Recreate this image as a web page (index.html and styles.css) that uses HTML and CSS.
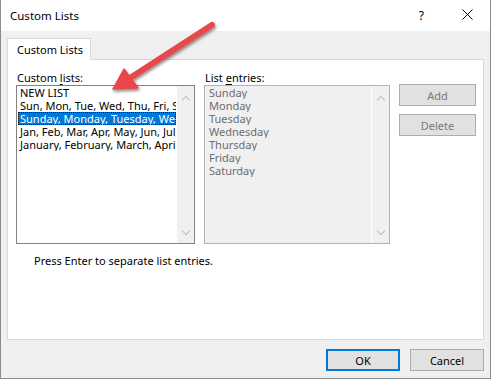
FILE: index.html
```html
<!DOCTYPE html>
<html lang="en">
<head>
    <meta charset="UTF-8">
    <title>Custom Lists</title>
    <link rel="stylesheet" href="styles.css">
</head>
<body>
    <div class="window">
        <div class="titlebar">
            <span class="title">Custom Lists</span>
            <span class="help">?</span>
            <span class="close">
                <svg width="11" height="11" viewBox="0 0 11 11">
                    <path d="M0.5 0.5 L10.5 10.5 M10.5 0.5 L0.5 10.5" stroke="#000" stroke-width="1"/>
                </svg>
            </span>
        </div>

        <div class="dialog-body">
            <div class="tabs">
                <div class="tab">Custom Lists</div>
            </div>

            <div class="panel">
                <div class="columns">
                    <div class="col col-lists">
                        <div class="label">Custom <u>l</u>ists:</div>
                        <div class="listbox">
                            <div class="items">
                                <div class="item">NEW LIST</div>
                                <div class="item">Sun, Mon, Tue, Wed, Thu, Fri, Sat</div>
                                <div class="item selected">Sunday, Monday, Tuesday, Wednesday, Thursday, Friday, Saturday</div>
                                <div class="item">Jan, Feb, Mar, Apr, May, Jun, Jul, Aug, Sep, Oct, Nov, Dec</div>
                                <div class="item">January, February, March, April, May, June, July</div>
                            </div>
                            <div class="scrollbar">
                                <span class="chev up"></span>
                                <span class="chev down"></span>
                            </div>
                        </div>
                    </div>

                    <div class="col col-entries">
                        <div class="label">List <u>e</u>ntries:</div>
                        <div class="listbox disabled">
                            <div class="items">
                                <div class="item">Sunday</div>
                                <div class="item">Monday</div>
                                <div class="item">Tuesday</div>
                                <div class="item">Wednesday</div>
                                <div class="item">Thursday</div>
                                <div class="item">Friday</div>
                                <div class="item">Saturday</div>
                            </div>
                            <div class="scrollbar">
                                <span class="chev up"></span>
                                <span class="chev down"></span>
                            </div>
                        </div>
                    </div>

                    <div class="col col-buttons">
                        <button class="btn" disabled>Add</button>
                        <button class="btn" disabled>Delete</button>
                    </div>
                </div>

                <p class="hint">Press Enter to separate list entries.</p>
            </div>

            <div class="footer">
                <button class="btn btn-default">OK</button>
                <button class="btn">Cancel</button>
            </div>
        </div>
    </div>

    <!-- annotation arrow drawn over the dialog -->
    <svg class="arrow" width="492" height="380" viewBox="0 0 492 380">
        <defs>
            <filter id="shadow" x="-20%" y="-20%" width="140%" height="140%">
                <feDropShadow dx="1" dy="2" stdDeviation="1.5" flood-color="#000" flood-opacity="0.45"/>
            </filter>
        </defs>
        <g filter="url(#shadow)" fill="#e8474b" stroke="#e8474b">
            <line x1="212" y1="25" x2="130" y2="78" stroke-width="6" stroke-linecap="round"/>
            <polygon points="113,89 124,69 138,88" stroke-width="1.5" stroke-linejoin="round"/>
        </g>
    </svg>
</body>
</html>
```

FILE: styles.css
```css
body {
    margin: 0;
    background-color: #fff;
    font-family: "Noto Sans", "Open Sans", sans-serif;
    font-size: 11px;
    color: #000;
}

.window {
    width: 491px;
    height: 379px;
    box-sizing: border-box;
    border: 1px solid #8c8c8c;
    border-top: none;
    display: flex;
    flex-direction: column;
    background-color: #f0f0f0;
}

.titlebar {
    height: 31px;
    background-color: #fff;
    display: flex;
    align-items: center;
    padding-left: 9px;
}
.title {
    flex: 1;
    font-size: 11.5px;
}
.help {
    font-size: 12px;
    margin-right: 38px;
    margin-top: -1px;
}
.close {
    width: 11px;
    height: 11px;
    margin-right: 17px;
    margin-top: -2px;
}
.close svg {
    display: block;
}

.dialog-body {
    flex: 1;
    padding: 7px 6px 0 6px;
}

.tabs {
    display: flex;
}
.tab {
    width: 84px;
    height: 22px;
    line-height: 22px;
    padding-left: 9px;
    box-sizing: border-box;
    white-space: nowrap;
    background-color: #fff;
    border: 1px solid #d9d9d9;
    border-bottom: none;
    margin-bottom: -1px;
    position: relative;
    z-index: 1;
}

.panel {
    height: 281px;
    box-sizing: border-box;
    background-color: #fff;
    border: 1px solid #d9d9d9;
    padding: 10px 8px 0 8px;
}

.columns {
    display: flex;
    gap: 9px;
}

.label {
    height: 15px;
    line-height: 15px;
    padding-left: 1px;
}
.label u {
    text-underline-offset: 2px;
}

.listbox {
    height: 159px;
    box-sizing: border-box;
    border: 1px solid #828282;
    display: flex;
    background-color: #fff;
}
.col-lists .listbox {
    width: 179px;
}
.col-entries .listbox {
    width: 186px;
}
.listbox.disabled {
    border-color: #b4b4b4;
    background-color: #f0f0f0;
    color: #6d6d6d;
}

.items {
    flex: 1;
    min-width: 0;
    padding: 0 1px;
}
.item {
    height: 13px;
    line-height: 13px;
    padding-left: 2px;
    white-space: nowrap;
    overflow: hidden;
}
.item.selected {
    background-color: #0078d7;
    color: #fff;
    outline: 1px dotted #1a1a1a;
    outline-offset: -1px;
}
.disabled .items {
    padding-left: 2px;
}

.scrollbar {
    width: 17px;
    background-color: #f0f0f0;
    display: flex;
    flex-direction: column;
    justify-content: space-between;
    align-items: center;
    padding: 8px 0 6px 0;
}
.disabled .scrollbar {
    border-left: 1px solid #fff;
}
.chev {
    width: 5px;
    height: 5px;
    border-left: 1px solid #bfbfbf;
    border-top: 1px solid #bfbfbf;
}
.chev.up {
    transform: rotate(45deg);
    margin-top: 3px;
}
.chev.down {
    transform: rotate(-135deg);
    margin-bottom: 3px;
}

.col-buttons {
    display: flex;
    flex-direction: column;
    gap: 8px;
    padding-top: 14px;
}

.btn {
    font-family: inherit;
    font-size: 11px;
    width: 77px;
    height: 22px;
    padding: 0;
    background-color: #e1e1e1;
    border: 1px solid #adadad;
    color: #000;
}
.btn:disabled {
    color: #7a7a7a;
}

.hint {
    margin: 9px 0 0 18px;
    line-height: 16px;
}

.footer {
    display: flex;
    justify-content: flex-end;
    gap: 10px;
    padding-top: 9px;
}
.footer .btn {
    width: 74px;
}
.btn-default {
    border: 2px solid #0078d7;
}

.arrow {
    position: absolute;
    left: 0;
    top: 0;
    pointer-events: none;
}
```
